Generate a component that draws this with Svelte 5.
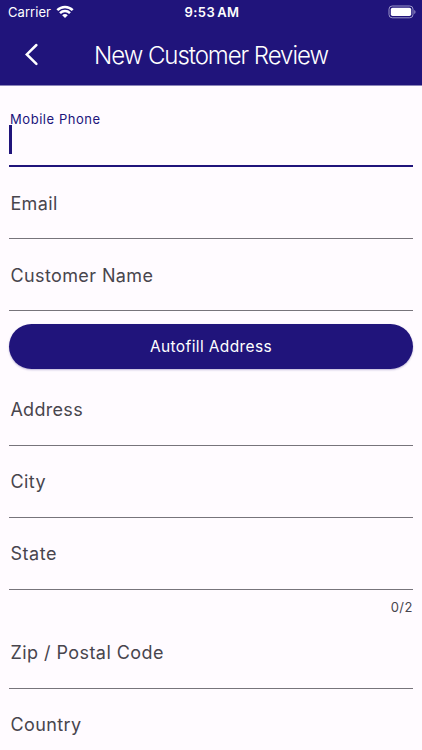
<script>
  const contact = [
    { label: 'Email', spacing: 0.4 },
    { label: 'Customer Name', spacing: 0.4 }
  ];
  const location = [
    { label: 'Address', spacing: 0.3 },
    { label: 'City', spacing: 0.45 },
    { label: 'State', spacing: 0.55, counter: '0/2' },
    { label: 'Zip / Postal Code', spacing: 0.45 },
    { label: 'Country', spacing: 0.42 }
  ];
</script>

{#snippet field(item, raised)}
  <div class="field" class:raised>
    <span style:letter-spacing="{item.spacing}px">{item.label}</span>
  </div>
  {#if item.counter}
    <div class="counter">{item.counter}</div>
  {/if}
{/snippet}

<div class="screen">
  <header>
    <div class="status">
      <div class="carrier">
        <span>Carrier</span>
        <svg width="18" height="14" viewBox="0 0 18 14" fill="none" stroke="#fff" stroke-width="2.5">
          <path d="M1.3 5.2C5.6 .8 12.4 .8 16.7 5.2" />
          <path d="M4 8.1C6.8 5.3 11.2 5.3 14 8.1" />
          <path d="M6.2 10.2C7.8 8.6 10.2 8.6 11.8 10.2L9 13Z" fill="#fff" stroke="none" />
        </svg>
      </div>
      <div class="time">9:53<span>AM</span></div>
      <svg class="battery" width="28" height="14" viewBox="0 0 28 14">
        <rect x="1" y="1" width="24" height="11.8" rx="3.2" fill="none" stroke="#9b96c9" />
        <rect x="2.8" y="2.8" width="20.4" height="8.2" rx="1.7" fill="#fff" />
        <path d="M26.3 4.9c1.6.7 1.6 3.3 0 4Z" fill="#9b96c9" />
      </svg>
    </div>
    <div class="bar">
      <svg class="back" width="16" height="24" viewBox="0 0 16 24" fill="none" stroke="#fff" stroke-width="2.5" stroke-linecap="round">
        <path d="M12.4 2L2.8 11.4L12.4 20.8" />
      </svg>
      <h1>New Customer Review</h1>
    </div>
  </header>
  <main>
    <div class="field focused">
      <label for="phone">Mobile Phone</label>
      <div id="phone" class="caret"></div>
    </div>
    {#each contact as item}
      {@render field(item, false)}
    {/each}
    <button>Autofill Address</button>
    {#each location as item}
      {@render field(item, true)}
    {/each}
  </main>
</div>

<style>
  :global(body) {
    margin: 0;
    background: #fffbff;
  }
  .screen {
    height: 750px;
    overflow: hidden;
    background: #fffbff;
    font-family: Inter, 'Liberation Sans', sans-serif;
    color: #48454d;
  }
  header {
    height: 86px;
    background: #20147b;
    border-bottom: 1px solid #8b85b8;
    box-sizing: border-box;
    color: #fff;
  }
  .status {
    display: grid;
    grid-template-columns: 1fr auto 1fr;
    align-items: center;
    height: 24px;
    padding: 0 6px 0 8px;
  }
  .carrier {
    display: flex;
    align-items: center;
    gap: 5px;
    font-size: 13px;
    letter-spacing: 0.05px;
  }
  .time {
    font-size: 13px;
    font-weight: 600;
    letter-spacing: 0.4px;
  }
  .time span {
    margin-left: 2px;
  }
  .battery {
    justify-self: end;
    margin-bottom: 1px;
  }
  .bar {
    display: grid;
    grid-template-columns: 70px 1fr 70px;
    align-items: center;
    height: 61px;
  }
  .back {
    margin-left: 24px;
  }
  h1 {
    margin: 2px 0 0;
    text-align: center;
    font-size: 24px;
    font-weight: 350;
    line-height: 30px;
    letter-spacing: -1.05px;
    white-space: nowrap;
  }
  main {
    display: flex;
    flex-direction: column;
    padding: 9px 9px 0;
  }
  .field {
    display: flex;
    flex: none;
    align-items: center;
    height: 72px;
    padding: 2px 0 0 1.4px;
    box-sizing: border-box;
    border-bottom: 1px solid #77747b;
    font-size: 18px;
    line-height: 24px;
  }
  .raised {
    padding-top: 0;
  }
  .focused {
    flex-direction: column;
    align-items: flex-start;
    padding: 17px 0 0;
    border-bottom: 2px solid #20147b;
  }
  label {
    padding-left: 1px;
    color: #20147b;
    font-size: 13px;
    line-height: 14px;
    letter-spacing: 0.55px;
  }
  .caret {
    width: 2.5px;
    height: 29px;
    margin-top: -1px;
    background: #20147b;
  }
  .counter {
    flex: none;
    height: 27px;
    padding-top: 9px;
    box-sizing: border-box;
    text-align: right;
    font-size: 13px;
    line-height: 16px;
    letter-spacing: 0.5px;
  }
  button {
    flex: none;
    height: 45px;
    margin: 13px 0 5px;
    padding: 0;
    border: 0;
    border-radius: 23px;
    background: #20147b;
    box-shadow: 0 1px 2px rgba(32, 20, 123, 0.3);
    color: #fff;
    font: 400 15.5px/20px Inter, 'Liberation Sans', sans-serif;
    letter-spacing: 0.37px;
  }
</style>
